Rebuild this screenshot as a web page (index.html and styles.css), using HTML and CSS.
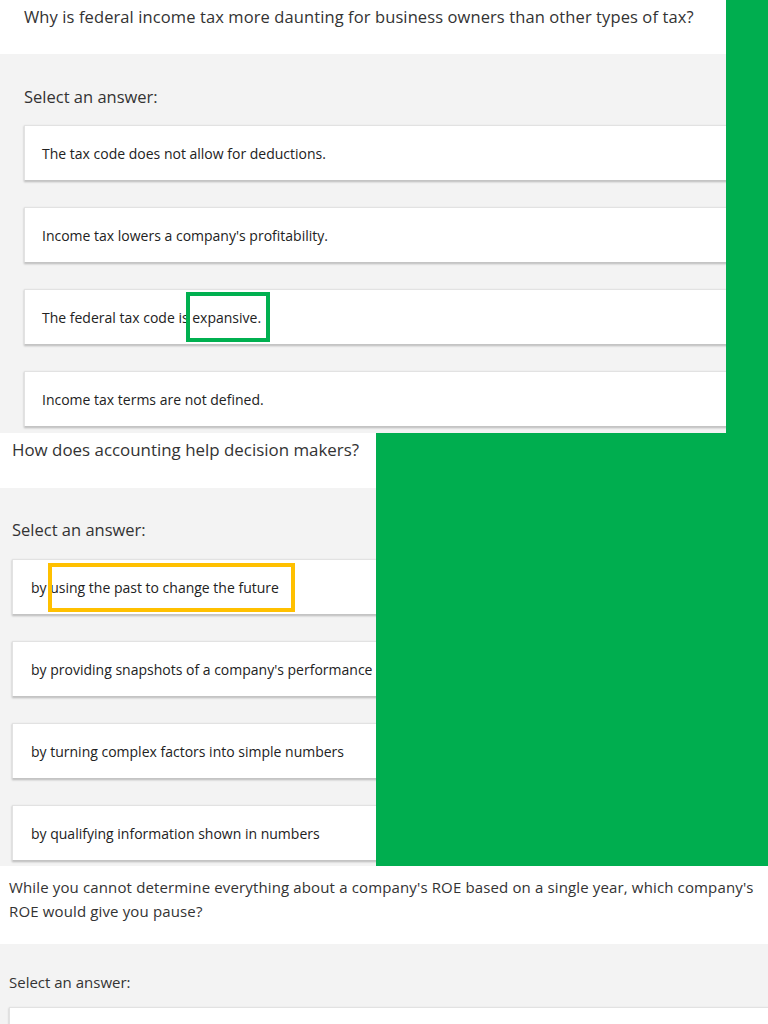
FILE: index.html
```html
<!DOCTYPE html>
<html lang="en">
<head>
<meta charset="utf-8">
<title>Quiz screenshots</title>
<link rel="stylesheet" href="styles.css">
</head>
<body>
<section class="panel p1">
  <div class="question">Why is federal income tax more daunting for business owners than other types of tax?</div>
  <div class="answers">
    <div class="label">Select an answer:</div>
    <div class="card">The tax code does not allow for deductions.</div>
    <div class="card">Income tax lowers a company's profitability.</div>
    <div class="card">The federal tax code is expansive.<span class="mark mark-green"></span></div>
    <div class="card">Income tax terms are not defined.</div>
  </div>
</section>
<section class="panel p2">
  <div class="question">How does accounting help decision makers?</div>
  <div class="answers">
    <div class="label">Select an answer:</div>
    <div class="card">by using the past to change the future<span class="mark mark-yellow"></span></div>
    <div class="card">by providing snapshots of a company's performance</div>
    <div class="card">by turning complex factors into simple numbers</div>
    <div class="card">by qualifying information shown in numbers</div>
  </div>
</section>
<section class="panel p3">
  <div class="question">While you cannot determine everything about a company's ROE based on a single year, which company's ROE would give you pause?</div>
  <div class="answers">
    <div class="label">Select an answer:</div>
    <div class="card"></div>
  </div>
</section>
</body>
</html>
```

FILE: styles.css
```css
html, body {
  margin: 0;
  padding: 0;
}
body {
  background: #00ae4f;
  width: 768px;
  height: 1024px;
  overflow: hidden;
  font-family: "Open Sans", "Noto Sans", sans-serif;
  color: #333;
}
.panel {
  overflow: hidden;
}
.question {
  background: #fff;
  color: #333;
}
.answers {
  background: #f3f3f3;
}
.label {
  color: #333;
}
.card {
  position: relative;
  background: #fff;
  border: 1px solid #e2e2e2;
  border-bottom-color: #c4c4c4;
  box-shadow: 0 1px 2px rgba(0, 0, 0, 0.25);
  box-sizing: border-box;
  display: flex;
  align-items: center;
  white-space: nowrap;
  color: #222;
}
.mark {
  position: absolute;
  box-sizing: border-box;
}
.mark-green {
  border: 4px solid #00b050;
}
.mark-yellow {
  border: 4px solid #ffc000;
}

/* Panel 1 */
.p1 {
  width: 726px;
  height: 433px;
}
.p1 .question {
  height: 54px;
  box-sizing: border-box;
  padding: 5px 0 0 24px;
  font-size: 16.5px;
  line-height: 24px;
  letter-spacing: 0.1px;
}
.p1 .answers {
  height: 379px;
  box-sizing: border-box;
  padding: 31px 0 0 24px;
  display: flex;
  flex-direction: column;
  gap: 26px;
}
.p1 .label {
  font-size: 16.5px;
  line-height: 24px;
  margin-bottom: -10px;
}
.p1 .card {
  height: 56px;
  padding-left: 17px;
  font-size: 14px;
  margin-right: -10px;
}
.p1 .mark-green {
  left: 161px;
  top: 2px;
  width: 84px;
  height: 50px;
}

/* Panel 2 */
.p2 {
  width: 376px;
  height: 433px;
}
.p2 .question {
  height: 55px;
  box-sizing: border-box;
  padding: 5px 0 0 12px;
  font-size: 16.9px;
  line-height: 24px;
}
.p2 .answers {
  height: 378px;
  box-sizing: border-box;
  padding: 30px 0 0 12px;
  display: flex;
  flex-direction: column;
  gap: 26px;
}
.p2 .label {
  font-size: 16.5px;
  line-height: 24px;
  margin-bottom: -9px;
}
.p2 .card {
  height: 56px;
  padding-left: 18px;
  font-size: 14px;
  margin-right: -40px;
}
.p2 .mark-yellow {
  left: 35px;
  top: 3px;
  width: 247px;
  height: 49px;
}

/* Panel 3 */
.p3 {
  width: 768px;
  height: 158px;
  background: #f3f3f3;
}
.p3 .question {
  height: 78px;
  box-sizing: border-box;
  padding: 9px 8px 0 9px;
  font-size: 15px;
  line-height: 24px;
  letter-spacing: 0.14px;
}
.p3 .answers {
  padding: 27px 0 0 9px;
  display: flex;
  flex-direction: column;
}
.p3 .label {
  font-size: 15px;
  line-height: 22px;
  margin-bottom: 14px;
}
.p3 .card {
  height: 56px;
  margin-right: -10px;
}
```
